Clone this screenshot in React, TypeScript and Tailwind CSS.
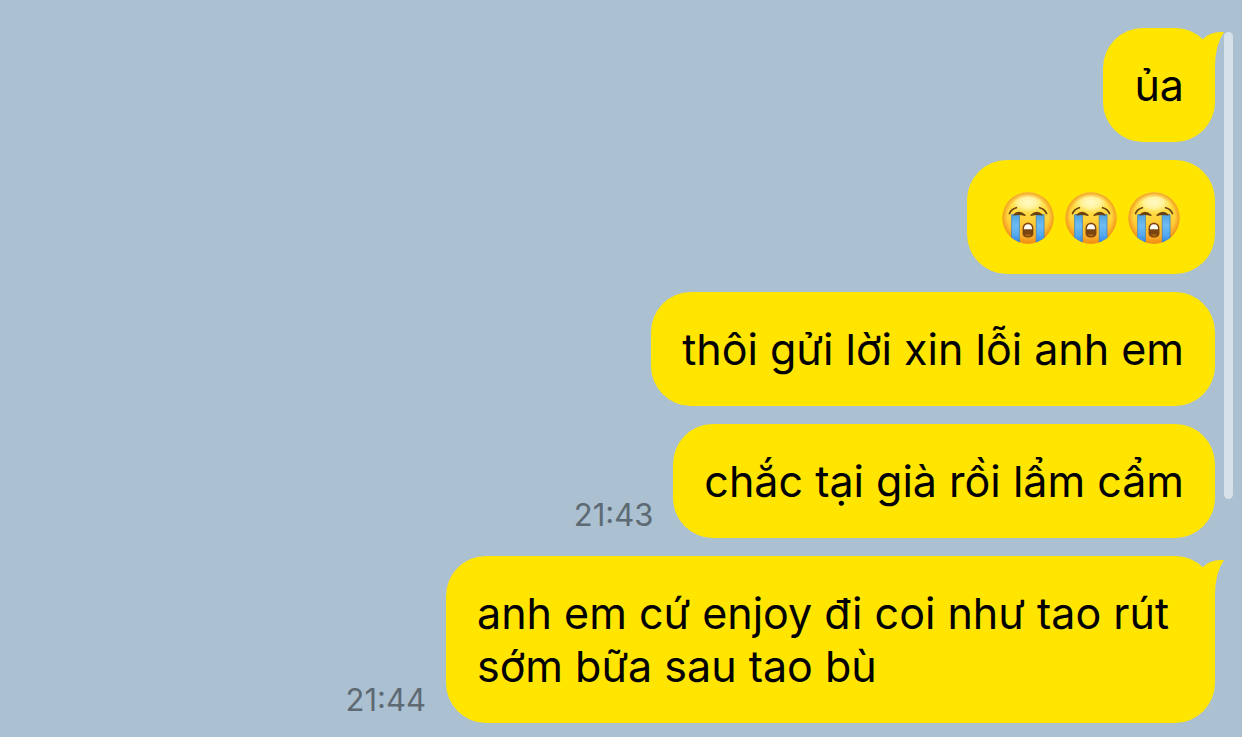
import { FC } from 'react';

type Message = {
  id: number;
  text: string;
  time?: string;
  hasTail?: boolean;
  isEmoji?: boolean;
};

const MESSAGES: Message[] = [
  { id: 1, text: 'ủa', hasTail: true },
  { id: 2, text: '😭😭😭', isEmoji: true },
  { id: 3, text: 'thôi gửi lời xin lỗi anh em' },
  { id: 4, text: 'chắc tại già rồi lẩm cẩm', time: '21:43' },
  {
    id: 5,
    text: 'anh em cứ enjoy đi coi như tao rút sớm bữa sau tao bù',
    time: '21:44',
    hasTail: true,
  },
];

const CryingFace: FC = () => (
  <svg viewBox="0 0 152 152" className="size-[52px]" aria-hidden="true">
    <defs>
      <linearGradient id="face" x1="0" y1="0" x2="0" y2="1">
        <stop offset="0" stopColor="#ffe84a" />
        <stop offset="0.5" stopColor="#ffd43c" />
        <stop offset="0.8" stopColor="#fdb62c" />
        <stop offset="1" stopColor="#f59a1c" />
      </linearGradient>
      <radialGradient id="rim" cx="50%" cy="50%" r="50%">
        <stop offset="0.8" stopColor="#f08c10" stopOpacity="0" />
        <stop offset="1" stopColor="#ee8a12" stopOpacity="0.75" />
      </radialGradient>
      <radialGradient id="shine" cx="50%" cy="45%" r="50%">
        <stop offset="0" stopColor="#fffbc8" />
        <stop offset="0.5" stopColor="#fff9b8" stopOpacity="0.75" />
        <stop offset="1" stopColor="#ffee70" stopOpacity="0" />
      </radialGradient>
      <linearGradient id="tear" x1="0" y1="0" x2="0" y2="1">
        <stop offset="0" stopColor="#4fa3e0" />
        <stop offset="0.35" stopColor="#6dbcf2" />
        <stop offset="0.65" stopColor="#55aaf0" />
        <stop offset="1" stopColor="#1f78dc" />
      </linearGradient>
      <clipPath id="head">
        <circle cx="76" cy="76" r="75" />
      </clipPath>
    </defs>
    <circle cx="76" cy="76" r="75" fill="url(#face)" />
    <ellipse cx="76" cy="34" rx="56" ry="34" fill="url(#shine)" />
    <circle cx="76" cy="76" r="75" fill="url(#rim)" />
    <g clipPath="url(#head)">
      <path
        d="M28 66h23v90H28zM100 66h23v90h-23z"
        fill="url(#tear)"
        stroke="#3f7fae"
        strokeWidth="2"
      />
    </g>
    <path
      d="M22 63Q27 50 42 46M130 63Q125 50 110 46"
      fill="none"
      stroke="#6b4210"
      strokeWidth="5"
      strokeLinecap="round"
    />
    <path
      d="M35 67Q50 52 67 68Q51 63 35 67ZM85 68Q102 52 117 67Q101 63 85 68Z"
      fill="#6b4210"
      stroke="#6b4210"
      strokeWidth="4"
      strokeLinejoin="round"
    />
    <path
      d="M60 109C60 96 66 90 76 90S92 96 92 109V120C92 129 86 133 76 133S60 129 60 120Z"
      fill="#7a4510"
    />
    <path d="M64 109Q64 94 76 94T88 109Z" fill="#fffdf5" />
    <path d="M66 126Q76 119 86 126Q83 130 76 130T66 126Z" fill="#a9600f" />
  </svg>
);

const Tail: FC = () => (
  <svg
    viewBox="0 0 26 36"
    className="absolute top-[3px] -right-[10px] h-9 w-[26px]"
    aria-hidden="true"
  >
    <path d="M0 12L4 8Q12 0 25 1Q16 14 16 36L6 20Z" fill="#ffe500" />
  </svg>
);

const Bubble: FC<{ message: Message }> = ({ message }) => (
  <li className="flex items-end justify-end gap-5">
    {message.time && (
      <time className="pb-2 text-[31px] leading-[30px] text-[#5d6a74]">
        {message.time}
      </time>
    )}
    <div className="relative max-w-[769px] rounded-[40px] bg-[#ffe500] px-[31px] pt-[31px] pb-[30px]">
      {message.hasTail && <Tail />}
      {message.isEmoji ? (
        <div
          role="img"
          aria-label={message.text}
          className="flex h-[53px] items-center gap-[11px] px-1"
        >
          <CryingFace />
          <CryingFace />
          <CryingFace />
        </div>
      ) : (
        <p className="text-[43px] leading-[53px] text-black">{message.text}</p>
      )}
    </div>
  </li>
);

export default function App() {
  return (
    <main className="relative min-h-screen bg-[#abc0d0] pt-7 pr-[27px] pb-3 font-['Inter',sans-serif]">
      <ul className="flex flex-col gap-[18px]">
        {MESSAGES.map(message => (
          <Bubble key={message.id} message={message} />
        ))}
      </ul>
      <div className="absolute top-8 right-[9px] h-[467px] w-[9px] rounded-full bg-[#d6e1e9]" />
    </main>
  );
}
